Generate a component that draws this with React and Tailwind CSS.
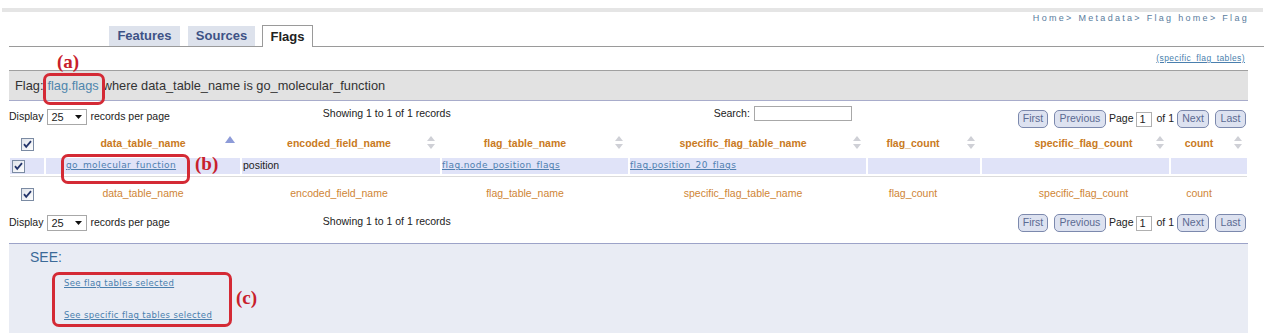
import React from 'react';

const cols = 'grid grid-cols-[34px_194px_198px_186px_236px_112px_187px_76px] gap-x-[2px]';

const headers = [
    { name: 'data_table_name', pad: '', active: true },
    { name: 'encoded_field_name', pad: 'pr-[4px]' },
    { name: 'flag_table_name', pad: 'pr-[20px]' },
    { name: 'specific_flag_table_name', pad: 'pr-[10px]' },
    { name: 'flag_count', pad: 'pr-[22px]' },
    { name: 'specific_flag_count', pad: 'pl-[16px]' },
    { name: 'count', pad: 'pr-[20px]' },
];

const CheckBox = () => (
    <svg width="13" height="13" viewBox="0 0 13 13">
        <defs>
            <linearGradient id="cbg" x1="0" y1="0" x2="1" y2="1">
                <stop offset="0" stopColor="#dfe3ea" />
                <stop offset="1" stopColor="#ffffff" />
            </linearGradient>
        </defs>
        <rect x="0.5" y="0.5" width="12" height="12" fill="url(#cbg)" stroke="#7b8ba3" />
        <path d="M3 6.2 L5.2 8.8 L10 3.2" fill="none" stroke="#24356b" strokeWidth="1.8" />
    </svg>
);

const SortIcon = ({ active }) =>
    active ? (
        <svg width="10" height="7" viewBox="0 0 10 7">
            <path d="M5 0 L10 7 L0 7 Z" fill="#8d9bd8" />
        </svg>
    ) : (
        <svg width="8" height="13" viewBox="0 0 8 13">
            <path d="M4 0 L8 5 L0 5 Z" fill="#cfd0d6" />
            <path d="M0 8 L8 8 L4 13 Z" fill="#cfd0d6" />
        </svg>
    );

const PageButton = ({ children, w }) => (
    <span className={`${w} h-[18px] flex items-center justify-center rounded-[5px] border border-[#7c89ad] bg-[#dde2f0] text-[10.5px] text-[#5b6a92]`}>
        {children}
    </span>
);

const ControlsRow = ({ search }) => (
    <div className="flex items-center ml-[9px] w-[1237px] text-[10.5px] text-[#222]">
        <span>Display</span>
        <span className="ml-[4px] w-[40px] h-[16px] border border-[#a8a8a8] flex items-center justify-between pl-[3px] pr-[4px] text-[11px]">
            25
            <svg width="7" height="4" viewBox="0 0 7 4"><path d="M0 0 L7 0 L3.5 4 Z" fill="#111" /></svg>
        </span>
        <span className="ml-[3px]">records per page</span>
        <span className="ml-[153px] self-start">Showing 1 to 1 of 1 records</span>
        {search ? (
            <div className="ml-[263px] flex items-center self-start">
                <span>Search:</span>
                <span className="ml-[4px] w-[98px] h-[15px] border border-[#a8a8a8] bg-white" />
            </div>
        ) : (
            <div className="ml-[376px]" />
        )}
        <div className={`ml-auto flex items-center ${search ? 'mt-[4px]' : ''}`}>
            <PageButton w="w-[30px]">First</PageButton>
            <span className="w-[6px]" />
            <PageButton w="w-[52px]">Previous</PageButton>
            <span className="ml-[3px] text-[#222]">Page</span>
            <span className="ml-[3px] w-[16px] h-[15px] border border-[#b0b0b0] bg-white text-[11px] leading-[13px] pl-[2px]">1</span>
            <span className="ml-[4px] text-[#222]">of 1</span>
            <span className="w-[3px]" />
            <PageButton w="w-[32px]">Next</PageButton>
            <span className="w-[6px]" />
            <PageButton w="w-[31px]">Last</PageButton>
        </div>
    </div>
);

const RedBox = ({ className }) => (
    <div className={`absolute border-[3px] border-[#d42a35] rounded-[7px] ${className}`} />
);

const RedLabel = ({ className, children }) => (
    <div className={`absolute text-[#c8202b] font-bold text-[19px] leading-none font-['Liberation_Serif',serif] ${className}`}>
        {children}
    </div>
);

const linkText = "text-[9px] tracking-[0.4px] font-['DejaVu_Sans',sans-serif] text-[#4f7fb0] underline";

export default function App() {
    return (
        <div className="relative w-[1279px] h-[335px] overflow-hidden bg-white font-['Liberation_Sans',Arial,sans-serif]">
            {/* top strip */}
            <div className="ml-[2px] mt-[8px] w-[1261px] h-[4px] bg-[#e5e5e5]" />

            {/* breadcrumb */}
            <div className="h-[14px] flex justify-end items-center pr-[30px] text-[9px] tracking-[2.3px] text-[#5a7d9e]">
                Home&gt; Metadata&gt; Flag home&gt; Flag
            </div>

            {/* tabs */}
            <div className="ml-[9px] w-[1255px] h-[21px] border-b border-[#9a9a9a] flex items-end pl-[100px] text-[13px] font-bold">
                <span className="w-[71px] h-[20px] bg-[#dde2ec] text-[#3d5286] flex items-center justify-center">Features</span>
                <span className="ml-[8px] w-[67px] h-[20px] bg-[#dde2ec] text-[#3d5286] flex items-center justify-center">Sources</span>
                <span className="ml-[7px] w-[51px] h-[22px] mb-[-1px] bg-white border border-b-0 border-[#9a9a9a] text-[#222] flex items-center justify-center">Flags</span>
            </div>

            {/* specific link */}
            <div className="h-[23px] flex justify-end items-center pr-[34px] text-[8.5px] tracking-[0.4px] text-[#4a7fae] underline">
                (specific_flag_tables)
            </div>

            {/* title bar */}
            <div className="ml-[9px] w-[1239px] h-[31px] border-t border-[#a0a0a0] border-b border-b-[#a8accb] bg-[#e2e2e2] flex items-center pl-[6px] text-[12.8px] text-[#333]">
                Flag: <span className="ml-[4px] text-[#4f86ad]">flag.flags</span>
                <span className="ml-[4px]">where data_table_name is go_molecular_function</span>
            </div>

            {/* controls */}
            <div className="mt-[5px] h-[27px]">
                <ControlsRow search />
            </div>

            {/* table header */}
            <div className={`${cols} ml-[10px] h-[22px] items-center text-[10.5px] font-bold text-[#c97a22]`}>
                <div className="flex justify-center"><CheckBox /></div>
                {headers.map((h) => (
                    <div key={h.name} className={`relative h-full flex items-center justify-center ${h.pad}`}>
                        {h.name}
                        <span className="absolute right-[5px] top-[3px]"><SortIcon active={h.active} /></span>
                    </div>
                ))}
            </div>

            {/* data row */}
            <div className="ml-[10px] w-[1237px] pt-[3px] pb-[2px] border-b border-[#dcdcdc]">
                <div className={`${cols} h-[16px] text-[10.5px] text-[#222]`}>
                    <div className="bg-[#e0e3f8] flex items-center pl-[2px]"><CheckBox /></div>
                    <div className={`bg-[#e0e3f8] flex items-center pl-[20px] ${linkText}`}>go_molecular_function</div>
                    <div className="bg-[#e0e3f8] flex items-center pl-[1px]">position</div>
                    <div className={`bg-[#e0e3f8] flex items-center ${linkText}`}>flag.node_position_flags</div>
                    <div className={`bg-[#e0e3f8] flex items-center ${linkText}`}>flag.position_20_flags</div>
                    <div className="bg-[#e0e3f8]" />
                    <div className="bg-[#e0e3f8]" />
                    <div className="bg-[#e0e3f8]" />
                </div>
            </div>

            {/* table footer */}
            <div className={`${cols} ml-[10px] mt-[7px] h-[20px] items-center text-[10.5px] text-[#cf8535]`}>
                <div className="flex justify-center"><CheckBox /></div>
                {headers.map((h) => (
                    <div key={h.name} className={`flex items-center justify-center ${h.pad}`}>{h.name}</div>
                ))}
            </div>

            {/* controls bottom */}
            <div className="mt-[7px] h-[32px] pt-[3px]">
                <ControlsRow />
            </div>

            {/* SEE section */}
            <div className="ml-[9px] w-[1239px] h-[90px] border-t border-[#9ca3c8] bg-[#e9ecf4] pl-[21px] pt-[3px]">
                <div className="text-[14px] leading-[20px] text-[#3b6a98]">SEE:</div>
                <div className="ml-[34px] mt-[10px] leading-[13px] text-[8.5px] tracking-[0.35px] font-['DejaVu_Sans',sans-serif] text-[#4a7fae] underline">See flag tables selected</div>
                <div className="ml-[34px] mt-[19px] leading-[13px] text-[8.5px] tracking-[0.35px] font-['DejaVu_Sans',sans-serif] text-[#4a7fae] underline">See specific flag tables selected</div>
            </div>

            {/* annotations */}
            <RedLabel className="left-[57px] top-[52px]">(a)</RedLabel>
            <RedBox className="left-[43px] top-[73px] w-[62px] h-[32px]" />
            <RedLabel className="left-[195px] top-[154px]">(b)</RedLabel>
            <RedBox className="left-[61px] top-[154px] w-[129px] h-[30px]" />
            <RedLabel className="left-[236px] top-[288px]">(c)</RedLabel>
            <RedBox className="left-[52px] top-[272px] w-[180px] h-[55px]" />
        </div>
    );
}
